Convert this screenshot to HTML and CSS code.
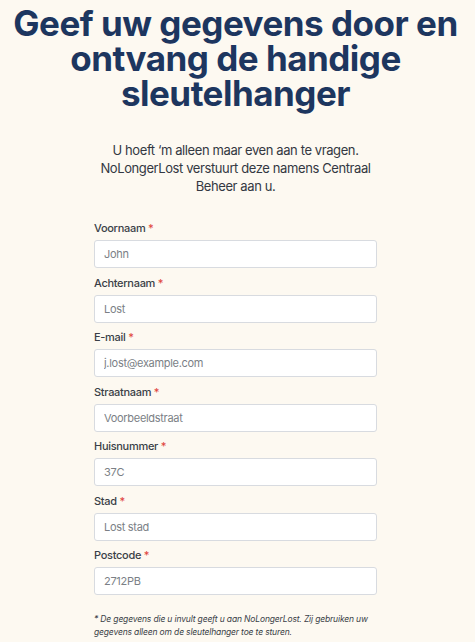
FILE: index.html
```html
<!DOCTYPE html>
<html lang="nl">
<head>
    <meta charset="UTF-8">
    <meta name="viewport" content="width=device-width, initial-scale=1.0">
    <title>Sleutelhanger aanvragen</title>
    <link rel="stylesheet" href="styles.css">
</head>
<body>
    <div class="page">
        <h1 class="title">Geef uw gegevens door en ontvang de handige sleutelhanger</h1>

        <p class="intro">U hoeft ‘m alleen maar even aan te vragen. NoLongerLost verstuurt deze namens Centraal Beheer aan u.</p>

        <form class="form">
            <div class="field">
                <label for="voornaam">Voornaam <span class="req">*</span></label>
                <input type="text" id="voornaam" placeholder="John">
            </div>
            <div class="field">
                <label for="achternaam">Achternaam <span class="req">*</span></label>
                <input type="text" id="achternaam" placeholder="Lost">
            </div>
            <div class="field">
                <label for="email">E-mail <span class="req">*</span></label>
                <input type="email" id="email" placeholder="j.lost@example.com">
            </div>
            <div class="field">
                <label for="straat">Straatnaam <span class="req">*</span></label>
                <input type="text" id="straat" placeholder="Voorbeeldstraat">
            </div>
            <div class="field">
                <label for="huisnummer">Huisnummer <span class="req">*</span></label>
                <input type="text" id="huisnummer" placeholder="37C">
            </div>
            <div class="field">
                <label for="stad">Stad <span class="req">*</span></label>
                <input type="text" id="stad" placeholder="Lost stad">
            </div>
            <div class="field">
                <label for="postcode">Postcode <span class="req">*</span></label>
                <input type="text" id="postcode" placeholder="2712PB">
            </div>

            <p class="note">* De gegevens die u invult geeft u aan NoLongerLost. Zij gebruiken uw gegevens alleen om de sleutelhanger toe te sturen.</p>
        </form>
    </div>
</body>
</html>
```

FILE: styles.css
```css
body {
    font-family: Inter, "Noto Sans", sans-serif;
    margin: 0;
    padding: 0;
    background-color: #fdf9f1;
    color: #333842;
}
.page {
    padding: 6px 4px 0 0;
    text-align: center;
}
.title {
    font-size: 35px;
    line-height: 35px;
    font-weight: 700;
    color: #1d365f;
    margin: 0;
    letter-spacing: -0.5px;
}
.intro {
    font-size: 13px;
    line-height: 18px;
    letter-spacing: -0.4px;
    width: 290px;
    margin: 30px auto 26px;
}
.form {
    width: 283px;
    margin: 0 auto;
    text-align: left;
}
.field {
    display: flex;
    flex-direction: column;
    gap: 4px;
    margin-bottom: 7.5px;
}
.field label {
    font-size: 11px;
    line-height: 15px;
    font-weight: 500;
    letter-spacing: -0.3px;
    color: #3a3f47;
}
.req {
    color: #e0463f;
}
.field input {
    height: 28px;
    box-sizing: border-box;
    border: 1px solid #d8dbe0;
    border-radius: 3px;
    background: white;
    padding: 0 9px;
    font-family: inherit;
    font-size: 11px;
    letter-spacing: -0.3px;
}
.field input::placeholder {
    color: #7b7f86;
}
.note {
    font-size: 8.5px;
    line-height: 13px;
    font-style: italic;
    letter-spacing: -0.15px;
    margin: 18px 0 0;
    color: #3a3f47;
}
```
